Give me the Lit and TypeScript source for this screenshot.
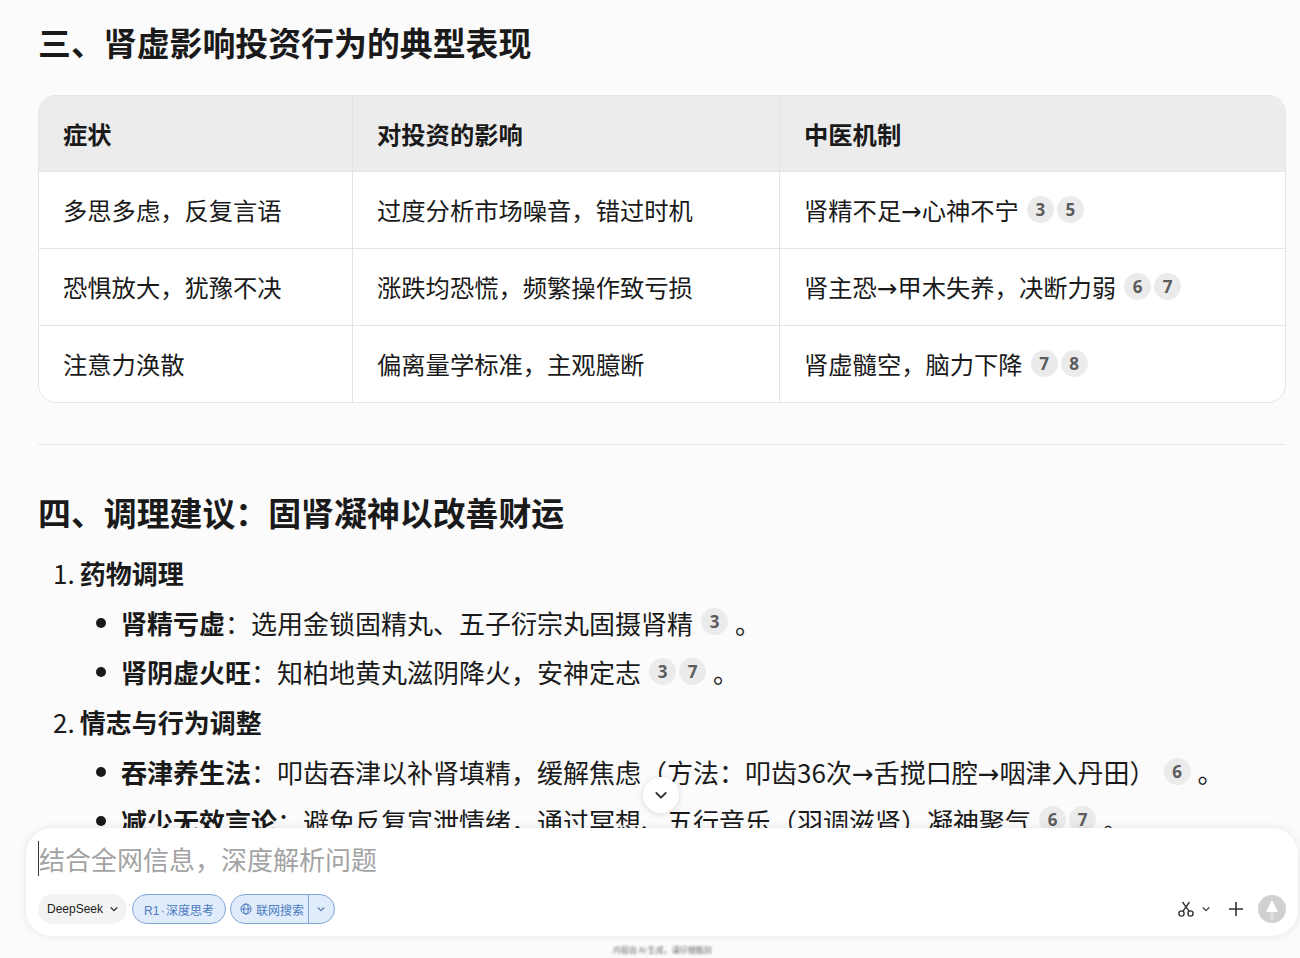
import { LitElement, html, css } from "lit";
import { customElement } from "lit/decorators.js";

const chevron = (cls: string) => html`<svg class=${cls} viewBox="0 0 12 12" fill="none" stroke="currentColor" stroke-width="1.4" stroke-linecap="round" stroke-linejoin="round"><path d="M2.5 4.5 6 8l3.5-3.5"/></svg>`;

const withArrows = (text: string) => {
  const parts = text.split("→");
  return parts.map((p, i) => (i === 0 ? p : html`<span class="arrow">→</span>${p}`));
};

const rows: [string, string, string, string[]][] = [
  ["多思多虑，反复言语", "过度分析市场噪音，错过时机", "肾精不足→心神不宁", ["3", "5"]],
  ["恐惧放大，犹豫不决", "涨跌均恐慌，频繁操作致亏损", "肾主恐→甲木失养，决断力弱", ["6", "7"]],
  ["注意力涣散", "偏离量学标准，主观臆断", "肾虚髓空，脑力下降", ["7", "8"]],
];

const cites = (list: string[]) => html`<span class="cites">${list.map((n) => html`<span class="cite">${n}</span>`)}</span>`;

@customElement("app-root")
export class AppRoot extends LitElement {
  static styles = css`
    :host {
      display: flex;
      flex-direction: column;
      position: relative;
      width: 1300px;
      height: 958px;
      overflow: hidden;
      background: #fbfbfb;
      color: #1a1a1a;
      font-family: "Noto Sans CJK SC", "Noto Sans", sans-serif;
      font-size: 24.3px;
    }
    .scroll { height: 828px; overflow: hidden; padding: 0 14px 0 38px; flex: none; box-sizing: border-box; }
    h2 { margin: 0; font-size: 32.9px; font-weight: 700; line-height: 46px; }
    .h1 { padding-top: 19px; height: 95px; box-sizing: border-box; }
    .table { display: grid; grid-template-columns: 313px 427px 1fr; width: 1248px; box-sizing: border-box; border: 1px solid #e4e4e4; border-radius: 18px; overflow: hidden; background: #fff; }
    .cell { display: flex; align-items: center; padding: 0 0 2px 24px; height: 77px; box-sizing: border-box; border-top: 1px solid #e4e4e4; border-left: 1px solid #e4e4e4; white-space: nowrap; }
    .cell.first { border-left: none; }
    .cell.head { background: #ececec; font-weight: 700; border-top: none; height: 75px; padding-bottom: 0; }
    .arrow { font-family: "DejaVu Sans", sans-serif; font-size: 24.5px; }
    .sub .arrow { font-size: 26px; }
    .rule { height: 1px; background: #e6e6e6; margin-top: 41px; }
    .h2 { padding-top: 44px; height: 103px; box-sizing: border-box; }
    .item { display: flex; align-items: center; white-space: nowrap; font-size: 26px; }
    .num { height: 49.5px; padding-left: 15px; }
    .num b { margin-left: 5px; font-weight: 700; }
    .sub { height: 49.5px; padding-left: 83px; position: relative; }
    .sub::before { content: ""; width: 10px; height: 10px; border-radius: 50%; background: #1a1a1a; position: absolute; left: 58px; top: 20px; }
    .sub b { font-weight: 700; }
    .sub.cut { margin-top: 1px; height: 48.5px; padding-top: 1px; box-sizing: border-box; }
    .cites { display: inline-flex; gap: 3px; margin-left: 8px; margin-right: 7px; }
    .cell .cites { margin-right: 0; margin-top: 0; }
    .sub .cites { margin-top: -1px; }
    .cite { width: 27px; height: 27px; border-radius: 50%; background: #ebebeb; color: #5c5c5c; font-family: "Open Sans", sans-serif; font-size: 17px; font-weight: 700; display: inline-flex; align-items: center; justify-content: center; }
    .down { position: absolute; left: 643px; top: 777px; width: 36px; height: 36px; border-radius: 50%; background: #fff; box-shadow: 0 1px 6px rgba(0,0,0,.14); display: flex; align-items: center; justify-content: center; color: #333; }
    .down svg { width: 16px; height: 16px; }
    .composer { width: 1272px; height: 108px; box-sizing: border-box; background: #fff; border-radius: 26px; box-shadow: 0 0 8px rgba(0,0,0,.09); display: flex; flex-direction: column; padding: 11px 12px 12px 12px; position: absolute; top: 828px; left: 26px; }
    .input { height: 38px; font-size: 26px; color: #a3a3a3; display: flex; align-items: center; }
    .caret { width: 1px; height: 35px; background: #333; }
    .bar { display: flex; align-items: center; margin-top: 17px; gap: 4px; }
    .chip { height: 30px; box-sizing: border-box; border-radius: 15px; font-family: "Liberation Sans", "Noto Sans CJK SC", sans-serif; font-size: 12px; display: flex; align-items: center; white-space: nowrap; }
    .model { width: 89px; background: #f3f3f3; color: #222; padding-left: 9px; gap: 6px; margin-right: 1px; }
    .model svg { width: 10px; height: 10px; }
    .on { background: #e0ebfb; border: 1px solid #7ea6d6; color: #4a7cc0; }
    .r1 { width: 94px; justify-content: center; word-spacing: -2px; }
    .web { width: 105px; padding-left: 9px; }
    .web .glob { width: 12px; height: 12px; margin-right: 4px; }
    .web .div { width: 1px; height: 100%; background: #7ea6d6; margin-left: 4px; }
    .web .chev { width: 10px; height: 10px; margin-left: 7px; color: #5a7fae; }
    .tools { margin-left: auto; display: flex; align-items: center; color: #333; }
    .sc { width: 18px; height: 18px; }
    .tools .chev { width: 10px; height: 10px; margin-left: 6px; }
    .plus { width: 16px; height: 16px; margin-left: 17px; }
    .send { width: 28px; height: 28px; border-radius: 50%; background: #d0d0d0; margin-left: 14px; display: flex; align-items: center; justify-content: center; }
    .send svg { width: 14px; height: 20px; }
    .foot { position: absolute; top: 942px; left: 613px; font-size: 8px; line-height: 16px; color: #666; filter: blur(1px); white-space: nowrap; }
  `;

  render() {
    return html`
      <div class="scroll">
        <div class="h1"><h2>三、肾虚影响投资行为的典型表现</h2></div>
        <div class="table">
          <div class="cell head first">症状</div>
          <div class="cell head">对投资的影响</div>
          <div class="cell head">中医机制</div>
          ${rows.map((r) => html`
            <div class="cell first">${r[0]}</div>
            <div class="cell">${r[1]}</div>
            <div class="cell"><span>${withArrows(r[2])}</span>${cites(r[3])}</div>
          `)}
        </div>
        <div class="rule"></div>
        <div class="h2"><h2>四、调理建议：固肾凝神以改善财运</h2></div>
        <div class="item num">1.<b>药物调理</b></div>
        <div class="item sub"><b>肾精亏虚</b>：选用金锁固精丸、五子衍宗丸固摄肾精${cites(["3"])}。</div>
        <div class="item sub"><b>肾阴虚火旺</b>：知柏地黄丸滋阴降火，安神定志${cites(["3", "7"])}。</div>
        <div class="item num">2.<b>情志与行为调整</b></div>
        <div class="item sub cut"><b>吞津养生法</b>：<span>${withArrows("叩齿吞津以补肾填精，缓解焦虑（方法：叩齿36次→舌搅口腔→咽津入丹田）")}</span>${cites(["6"])}。</div>
        <div class="item sub"><b>减少无效言论</b>：避免反复宣泄情绪，通过冥想、五行音乐（羽调滋肾）凝神聚气${cites(["6", "7"])}。</div>
      </div>
      <div class="down">${chevron("")}</div>
      <div class="composer">
        <div class="input"><span class="caret"></span>结合全网信息，深度解析问题</div>
        <div class="bar">
          <div class="chip model">DeepSeek${chevron("")}</div>
          <div class="chip on r1">R1 · 深度思考</div>
          <div class="chip on web">
            <svg class="glob" viewBox="0 0 12 12" fill="none" stroke="currentColor" stroke-width="1"><circle cx="6" cy="6" r="5"/><ellipse cx="6" cy="6" rx="2.2" ry="5"/><path d="M1 6h10"/></svg>
            联网搜索<span class="div"></span>${chevron("chev")}
          </div>
          <div class="tools">
            <svg class="sc" viewBox="0 0 18 18" fill="none" stroke="currentColor" stroke-width="1.4"><circle cx="4.5" cy="13.5" r="2.6"/><circle cx="13.5" cy="13.5" r="2.6"/><path d="M5.8 11.3 12.5 2M12.2 11.3 5.5 2"/></svg>
            ${chevron("chev")}
            <svg class="plus" viewBox="0 0 16 16" fill="none" stroke="currentColor" stroke-width="1.6"><path d="M8 1v14M1 8h14"/></svg>
            <div class="send"><svg viewBox="0 0 14 20"><path d="M7 1 13 13H1Z" fill="#fff"/><path d="M5.5 13h3v7h-3Z" fill="#fff" fill-opacity=".4"/></svg></div>
          </div>
        </div>
      </div>
      <div class="foot">内容由 AI 生成，请仔细甄别</div>
    `;
  }
}
